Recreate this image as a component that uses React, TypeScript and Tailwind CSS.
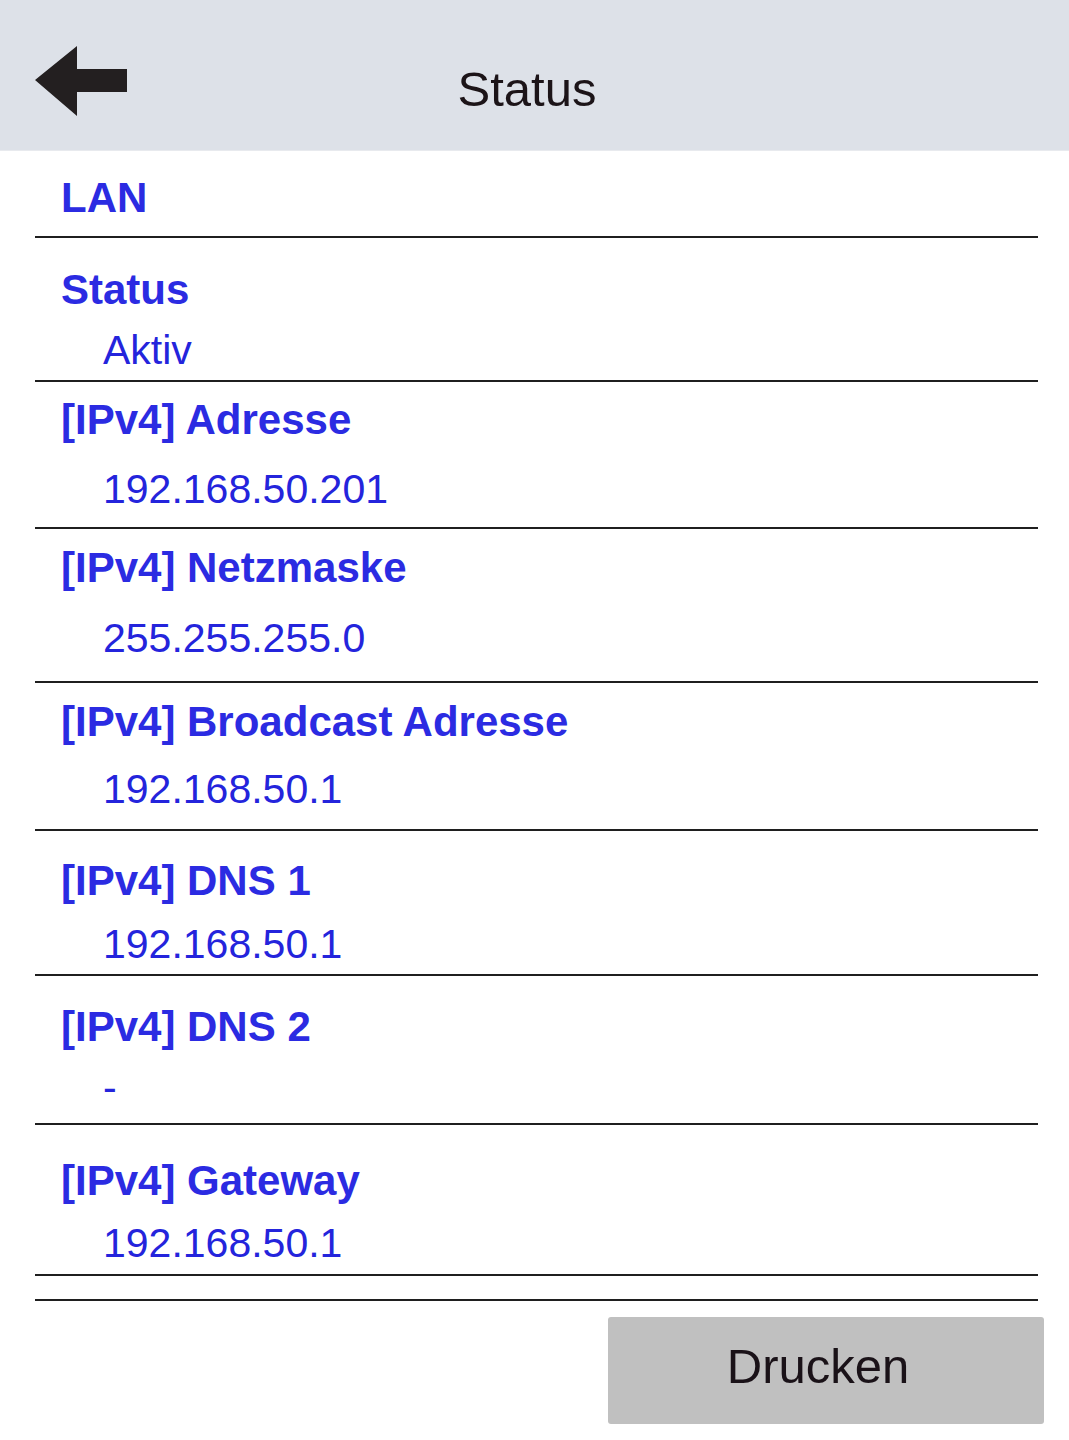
const rows = [
	{ label: 'Status', value: 'Aktiv', h: 'h-[144px]', pt: 'pt-[28px]', gap: 'mt-[12px]' },
	{ label: '[IPv4] Adresse', value: '192.168.50.201', h: 'h-[147px]', pt: 'pt-[14px]', gap: 'mt-[21px]' },
	{ label: '[IPv4] Netzmaske', value: '255.255.255.0', h: 'h-[154px]', pt: 'pt-[15px]', gap: 'mt-[22px]' },
	{ label: '[IPv4] Broadcast Adresse', value: '192.168.50.1', h: 'h-[148px]', pt: 'pt-[15px]', gap: 'mt-[19px]' },
	{ label: '[IPv4] DNS 1', value: '192.168.50.1', h: 'h-[145px]', pt: 'pt-[26px]', gap: 'mt-[15px]' },
	{ label: '[IPv4] DNS 2', value: '-', h: 'h-[149px]', pt: 'pt-[27px]', gap: 'mt-[12px]' },
	{ label: '[IPv4] Gateway', value: '192.168.50.1', h: 'h-[151px]', pt: 'pt-[32px]', gap: 'mt-[14px]' },
]

const BackArrow = () => (
	<svg width="92" height="70" viewBox="0 0 92 70" className="shrink-0">
		<polygon points="0,34 42,0 42,23 92,23 92,46 42,46 42,70" fill="#231f20" />
	</svg>
)

export default function App() {
	return (
		<div className="w-[1069px] h-[1440px] bg-white font-['Liberation_Sans',Arial,sans-serif]">
			<div className="flex items-start h-[151px] bg-[#dde1e8] border-b border-[#e8eaee]">
				<div className="ml-[35px] mt-[46px]">
					<BackArrow />
				</div>
				<div className="flex-1 pr-[142px] mt-[61px] text-center text-[49px] leading-[56px] text-[#1c1418]">
					Status
				</div>
			</div>

			<div className="ml-[35px] mr-[31px]">
				<div className="h-[87px] border-b-2 border-[#1f1f1f] pt-[23px] pl-[26px]">
					<div className="text-[42px] leading-[48px] font-bold text-[#2b2be2]">LAN</div>
				</div>
				{rows.map((r) => (
					<div key={r.label} className={`${r.h} border-b-2 border-[#1f1f1f] ${r.pt}`}>
						<div className="pl-[26px] text-[42px] leading-[48px] font-bold text-[#2b2be2]">
							{r.label}
						</div>
						<div className={`${r.gap} pl-[68px] text-[41px] leading-[48px] text-[#2424dc]`}>
							{r.value}
						</div>
					</div>
				))}
				<div className="h-[25px] border-b-2 border-[#1f1f1f]" />
			</div>

			<div className="flex justify-end mr-[25px] mt-[16px]">
				<button className="w-[436px] h-[107px] rounded-[3px] bg-[#c0c0c0] pr-[16px] pb-[8px] text-[49px] text-[#1a1218]">
					Drucken
				</button>
			</div>
		</div>
	)
}
